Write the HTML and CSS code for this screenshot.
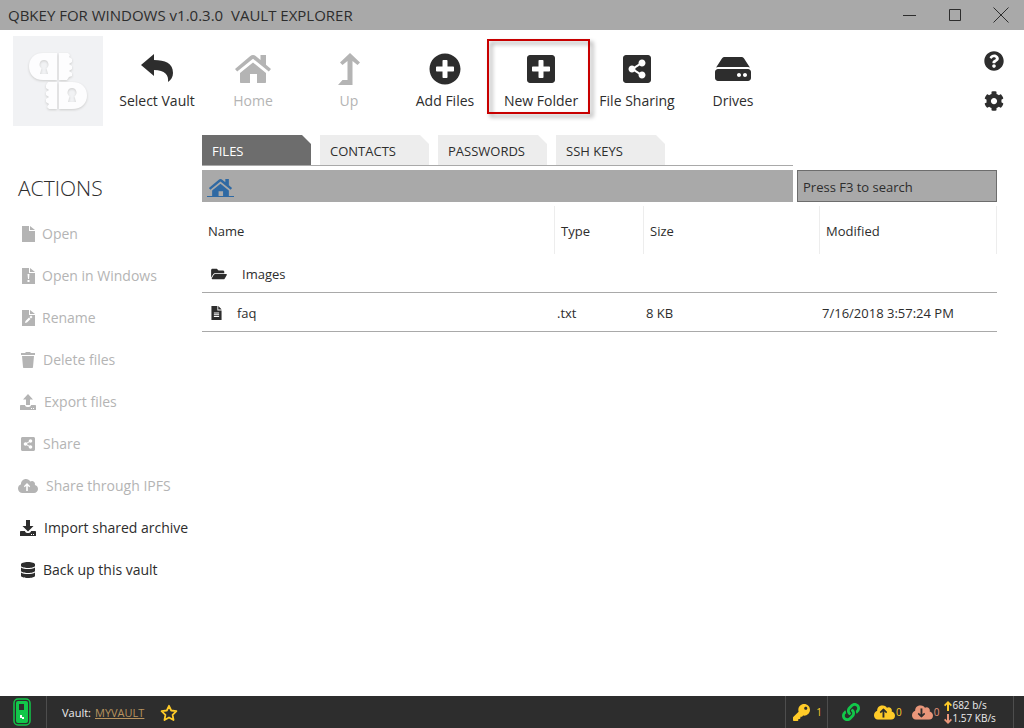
FILE: index.html
```html
<!DOCTYPE html>
<html lang="en">
<head>
    <meta charset="UTF-8">
    <meta name="viewport" content="width=device-width, initial-scale=1.0">
    <title>QBKEY for Windows - Vault Explorer</title>
    <link rel="stylesheet" href="styles.css">
</head>
<body>
    <!-- Shared icons -->
    <svg class="sprite" aria-hidden="true">
        <symbol id="home" viewBox="0 0 36 28">
            <path d="M18 0c1 0 2 .4 2.700 1L25.500 5V0H31v9.800L36 14l-2.200 2.600L18 3.700 2.200 16.600 0 14 15.300 1C16 .4 17 0 18 0z"/>
            <path d="M18 7.500L31 18v9c0 .6-.4 1-1 1h-8v-9h-7v9H6c-.6 0-1-.4-1-1v-9z"/>
        </symbol>
        <symbol id="share" viewBox="0 32 448 448">
            <path d="M448 80v352c0 26.510-21.490 48-48 48H48c-26.510 0-48-21.490-48-48V80c0-26.510 21.490-48 48-48h352c26.510 0 48 21.490 48 48zM304 296c-14.562 0-27.823 5.561-37.783 14.671l-67.958-40.775a56.339 56.339 0 0 0 0-27.793l67.958-40.775C276.177 210.439 289.438 216 304 216c30.928 0 56-25.072 56-56s-25.072-56-56-56-56 25.072-56 56c0 4.797.605 9.453 1.740 13.897l-67.958 40.775C171.823 205.561 158.562 200 144 200c-30.928 0-56 25.072-56 56s25.072 56 56 56c14.562 0 27.823-5.561 37.783-14.671l67.958 40.775a56.088 56.088 0 0 0-1.740 13.897c0 30.928 25.072 56 56 56s56-25.072 56-56C360 321.072 334.928 296 304 296z"/>
        </symbol>
        <symbol id="file" viewBox="0 0 12 16">
            <path d="M0 0h7v5h5v11H0z"/>
            <path d="M8 0l4 4H8z"/>
        </symbol>
        <symbol id="cloud" viewBox="0 32 640 448">
            <path d="M537.600 226.600c4.100-10.700 6.400-22.400 6.400-34.600 0-53-43-96-96-96-19.700 0-38.100 6-53.300 16.200C367 64.200 315.300 32 256 32c-88.400 0-160 71.600-160 160 0 2.700.1 5.400.2 8.100C40.200 219.800 0 273.200 0 336c0 79.500 64.500 144 144 144h368c70.700 0 128-57.300 128-128 0-61.900-44-113.600-102.400-125.400z"/>
        </symbol>
        <symbol id="arrow" viewBox="0 0 8 10">
            <path d="M4 0l4 4-1.200 1.200L5 3.500V10H3V3.500L1.200 5.200 0 4z"/>
        </symbol>
        <symbol id="tray" viewBox="0 0 16 5">
            <path d="M1 0h4c0 1.500 1.500 2 3 2s3-.5 3-2h4c.6 0 1 .4 1 1v4H0V1c0-.6.400-1 1-1zM11 3v1h1V3zM13 3v1h1V3z" fill-rule="evenodd"/>
        </symbol>
    </svg>

    <header class="titlebar">
        <h1>QBKEY FOR WINDOWS v1.0.3.0&nbsp; VAULT EXPLORER</h1>
        <div class="window-buttons">
            <button aria-label="Minimize"><svg width="16" height="16" viewBox="0 0 16 16"><path d="M2 8.500h13"/></svg></button>
            <button aria-label="Maximize"><svg width="16" height="16" viewBox="0 0 16 16"><path d="M2.500 2.500h11v11h-11z"/></svg></button>
            <button aria-label="Close"><svg width="16" height="16" viewBox="0 0 16 16"><path d="M.5.5l15 15M15.500.5l-15 15"/></svg></button>
        </div>
    </header>

    <div class="toolbar">
        <svg class="logo" viewBox="0 0 90 90" role="img" aria-label="QBKEY">
            <rect width="90" height="90" fill="#f1f2f4"/>
            <g class="logo-shape" fill="#fdfdfe" fill-rule="evenodd">
                <path d="M44 17v27H30C21 44 16 38 16 30.500S21 17 30 17zM31 24a4.500 4.500 0 0 0-2.500 8.200L27 38h8l-1.500-5.800A4.500 4.500 0 0 0 31 24z"/>
                <path d="M46 17h9l2 2-1 2 3 2v3l-3 2 3 2v3l-3 2 3 2v3l-3 1-2 3h-8z"/>
                <path d="M44 46v27h-8l-2-2 2-3-3-2v-3l3-2-3-2v-3l3-2-3-2v-3l2-3z"/>
                <path d="M46 46h13c10 0 15 6 15 13.500S69 73 59 73H46zM59 52a4.500 4.500 0 0 0-2.500 8.200L55 66h8l-1.500-5.800A4.500 4.500 0 0 0 59 52z"/>
            </g>
        </svg>
        <nav class="tools">
            <button class="tool">
                <svg width="34" height="32" viewBox="0 0 34 32"><path d="M1 12L14 1v6c11 0 19 3 19 13 0 4-2 7-5 9 1-7-3-12-14-12v6z"/></svg>
                <span>Select Vault</span>
            </button>
            <button class="tool" disabled>
                <svg width="36" height="28"><use href="#home"/></svg>
                <span>Home</span>
            </button>
            <button class="tool" disabled>
                <svg width="22" height="32" viewBox="0 0 22 32"><path d="M12 0l10 9.500-2.500 2.500-5-4v24H0l4.500-5H9.500V8l-5 4L2 9.500z"/></svg>
                <span>Up</span>
            </button>
            <button class="tool">
                <svg width="32" height="32" viewBox="0 0 512 512"><path d="M256 8C119 8 8 119 8 256s111 248 248 248 248-111 248-248S393 8 256 8zm144 276c0 6.600-5.400 12-12 12h-92v92c0 6.600-5.400 12-12 12h-56c-6.600 0-12-5.400-12-12v-92h-92c-6.600 0-12-5.400-12-12v-56c0-6.600 5.400-12 12-12h92v-92c0-6.600 5.400-12 12-12h56c6.600 0 12 5.400 12 12v92h92c6.600 0 12 5.400 12 12v56z"/></svg>
                <span>Add Files</span>
            </button>
            <button class="tool highlighted">
                <svg width="28" height="28" viewBox="0 32 448 448"><path d="M400 32H48C21.500 32 0 53.500 0 80v352c0 26.500 21.500 48 48 48h352c26.500 0 48-21.500 48-48V80c0-26.500-21.500-48-48-48zm-32 252c0 6.600-5.400 12-12 12h-92v92c0 6.600-5.400 12-12 12h-56c-6.600 0-12-5.400-12-12v-92H92c-6.600 0-12-5.400-12-12v-56c0-6.600 5.400-12 12-12h92v-92c0-6.600 5.400-12 12-12h56c6.600 0 12 5.400 12 12v92h92c6.600 0 12 5.400 12 12v56z"/></svg>
                <span>New Folder</span>
            </button>
            <button class="tool">
                <svg width="28" height="28"><use href="#share"/></svg>
                <span>File Sharing</span>
            </button>
            <button class="tool">
                <svg width="36" height="32" viewBox="0 0 576 512"><path d="M576 304v96c0 26.510-21.490 48-48 48H48c-26.510 0-48-21.490-48-48v-96c0-26.510 21.490-48 48-48h480c26.510 0 48 21.490 48 48zm-48-80a79.557 79.557 0 0 1 30.777 6.165L462.250 85.374A48.003 48.003 0 0 0 422.311 64H153.689a48 48 0 0 0-39.938 21.374L17.223 230.165A79.557 79.557 0 0 1 48 224h480zm-48 96c-17.673 0-32 14.327-32 32s14.327 32 32 32 32-14.327 32-32-14.327-32-32-32zm-96 0c-17.673 0-32 14.327-32 32s14.327 32 32 32 32-14.327 32-32-14.327-32-32-32z"/></svg>
                <span>Drives</span>
            </button>
        </nav>
        <div class="side-tools">
            <button aria-label="Help"><svg width="20" height="20" viewBox="0 0 512 512"><path d="M504 256c0 136.997-111.043 248-248 248S8 392.997 8 256C8 119.083 119.043 8 256 8s248 111.083 248 248zM262.655 90c-54.497 0-89.255 22.957-116.549 63.758-3.536 5.286-2.353 12.415 2.715 16.258l34.699 26.310c5.205 3.947 12.621 3.008 16.665-2.122 17.864-22.658 30.113-35.797 57.303-35.797 20.429 0 45.698 13.148 45.698 32.958 0 14.976-12.363 22.667-32.534 33.976C247.128 238.528 216 254.941 216 296v4c0 6.627 5.373 12 12 12h56c6.627 0 12-5.373 12-12v-1.333c0-28.462 83.186-29.647 83.186-106.667 0-58.002-60.165-102-116.531-102zM256 338c-25.365 0-46 20.635-46 46 0 25.364 20.635 46 46 46s46-20.636 46-46c0-25.365-20.635-46-46-46z"/></svg></button>
            <button aria-label="Settings"><svg width="20" height="20" viewBox="0 0 512 512"><path d="M487.400 315.700l-42.600-24.600c4.300-23.200 4.300-47 0-70.200l42.600-24.600c4.900-2.800 7.100-8.600 5.500-14-11.100-35.600-30-67.800-54.700-94.600-3.800-4.100-10-5.100-14.800-2.300L380.800 110c-17.900-15.400-38.500-27.300-60.800-35.100V25.800c0-5.600-3.900-10.500-9.400-11.700-36.700-8.200-74.300-7.800-109.200 0-5.500 1.200-9.400 6.100-9.400 11.700V75c-22.200 7.900-42.800 19.800-60.800 35.100L88.700 85.500c-4.900-2.800-11-1.900-14.800 2.300-24.700 26.700-43.600 58.900-54.700 94.600-1.700 5.400.6 11.200 5.500 14L67.300 221c-4.300 23.200-4.300 47 0 70.200l-42.600 24.600c-4.900 2.800-7.100 8.600-5.500 14 11.100 35.600 30 67.800 54.700 94.600 3.800 4.100 10 5.100 14.800 2.300l42.600-24.600c17.900 15.400 38.500 27.300 60.800 35.100v49.200c0 5.600 3.900 10.500 9.400 11.700 36.700 8.200 74.300 7.800 109.200 0 5.500-1.200 9.400-6.100 9.400-11.700v-49.200c22.200-7.900 42.800-19.800 60.800-35.100l42.600 24.600c4.900 2.800 11 1.900 14.800-2.300 24.700-26.700 43.600-58.900 54.700-94.600 1.500-5.500-.7-11.300-5.600-14.100zM256 336c-44.100 0-80-35.900-80-80s35.900-80 80-80 80 35.900 80 80-35.900 80-80 80z"/></svg></button>
        </div>
    </div>

    <div class="content">
        <aside class="actions">
            <h2>ACTIONS</h2>
            <button disabled>
                <svg width="18" height="16" viewBox="-4 0 18 16"><path d="M0 0h7v5h6v11H0zM8 0l5 4H8z"/></svg>
                Open
            </button>
            <button disabled>
                <svg width="18" height="16" viewBox="-4 0 18 16"><path d="M0 0h7v5h6v11H0zM8 0l5 4H8z"/><path class="cut" d="M5.500 6h2l-.5 5H6zM5.500 12h2v2h-2z"/></svg>
                Open in Windows
            </button>
            <button disabled>
                <svg width="18" height="16" viewBox="-4 0 18 16"><path d="M0 0h7v5h6v11H0zM8 0l5 4H8z"/><path class="cut" d="M3 13l.5-2 3.500-3.500 1.500 1.500L5 12.500zM7.500 7L9 5.500 10.500 7 9 8.500z"/></svg>
                Rename
            </button>
            <button disabled>
                <svg width="19" height="16" viewBox="-3 0 19 16"><path d="M0 1h4l1-1h4l1 1h4v2H0zM1 4h12l-1 11c0 .6-.4 1-1 1H3c-.6 0-1-.4-1-1z"/></svg>
                Delete files
            </button>
            <button disabled>
                <svg width="20" height="16" viewBox="-2 0 20 16"><path d="M8 0l5 5.500h-3V11H6V5.500H3z"/><use href="#tray" y="11" width="16" height="5"/></svg>
                Export files
            </button>
            <button disabled>
                <svg width="19" height="16" viewBox="0 0 19 16"><use href="#share" x="3" y="1" width="14" height="14"/></svg>
                Share
            </button>
            <button disabled>
                <svg width="22" height="16" viewBox="0 0 22 16"><use href="#cloud" y="1" width="20" height="14"/><use class="cut" href="#arrow" x="5" y="5" width="8" height="8"/></svg>
                Share through IPFS
            </button>
            <button>
                <svg width="20" height="16" viewBox="-2 0 20 16"><path d="M6 0h4v6h3.500L8 11.500 2.500 6H6z"/><use href="#tray" y="11" width="16" height="5"/></svg>
                Import shared archive
            </button>
            <button>
                <svg width="19" height="16" viewBox="-96 0 608 512"><path d="M448 73.143v45.714C448 159.143 347.667 192 224 192S0 159.143 0 118.857V73.143C0 32.857 100.333 0 224 0s224 32.857 224 73.143zM448 176v102.857C448 319.143 347.667 352 224 352S0 319.143 0 278.857V176c48.125 33.143 136.208 48.572 224 48.572S399.874 209.143 448 176zm0 160v102.857C448 479.143 347.667 512 224 512S0 479.143 0 438.857V336c48.125 33.143 136.208 48.572 224 48.572S399.874 369.143 448 336z"/></svg>
                Back up this vault
            </button>
        </aside>

        <main class="explorer">
            <div class="explorer-top">
                <div class="tabs" role="tablist">
                    <button class="tab active" role="tab" aria-selected="true">FILES</button>
                    <button class="tab" role="tab" aria-selected="false">CONTACTS</button>
                    <button class="tab" role="tab" aria-selected="false">PASSWORDS</button>
                    <button class="tab" role="tab" aria-selected="false">SSH KEYS</button>
                </div>
                <div class="path">
                    <a href="#" aria-label="Home"><svg width="27" height="20" viewBox="0 0 27 20"><use href="#home" y="1" width="27" height="18"/><path d="M0 18h27v1H0z"/></svg></a>
                </div>
                <input class="search" type="text" placeholder="Press F3 to search" aria-label="Search">
            </div>

            <table class="files">
                <colgroup>
                    <col class="col-name">
                    <col class="col-type">
                    <col class="col-size">
                    <col class="col-modified">
                </colgroup>
                <thead>
                    <tr><th>Name</th><th>Type</th><th>Size</th><th>Modified</th></tr>
                </thead>
                <tbody>
                    <tr>
                        <td>
                            <div class="entry">
                                <svg width="16" height="14" viewBox="0 0 576 512"><path d="M572.694 292.093L500.270 416.248A63.997 63.997 0 0 1 444.989 448H45.025c-18.523 0-30.064-20.093-20.731-36.093l72.424-124.155A64 64 0 0 1 152 256h399.964c18.523 0 30.064 20.093 20.730 36.093zM152 224h328v-48c0-26.510-21.490-48-48-48H272l-64-64H48C21.490 64 0 85.490 0 112v278.046l69.077-118.418C86.214 242.250 117.989 224 152 224z"/></svg>
                                Images
                            </div>
                        </td>
                        <td></td><td></td><td></td>
                    </tr>
                    <tr>
                        <td>
                            <div class="entry">
                                <svg width="11" height="14" viewBox="0 0 12 16"><use href="#file"/><path class="cut" d="M3 7.500h6v1H3zM3 9.500h6v1H3zM3 11.500h6v1H3z"/></svg>
                                faq
                            </div>
                        </td>
                        <td>.txt</td><td>8 KB</td><td>7/16/2018 3:57:24 PM</td>
                    </tr>
                </tbody>
            </table>
        </main>
    </div>

    <footer class="statusbar">
        <div class="device">
            <svg width="20" height="28" viewBox="0 0 20 28"><rect x="2" y="1" width="16" height="26" rx="4" fill="none" stroke="#12c74a" stroke-width="1.500"/><rect x="4" y="3" width="12" height="22" rx="2" fill="#12c74a"/><path d="M7 6h5v6H7z" fill="#2d2d2d"/><path d="M8 17h2v2h2v2h-2v-1H8z" fill="#fff"/></svg>
        </div>
        <div class="vault">
            Vault: <a href="#">MYVAULT</a>
            <button aria-label="Favorite"><svg width="18" height="18" viewBox="0 0 18 18"><path d="M9 1.800l2.200 4.700 5.200.7-3.800 3.600.9 5.200L9 13.500 4.500 16l.9-5.200-3.800-3.600 5.200-.7z" fill="none" stroke="#ffcb28" stroke-width="1.800" stroke-linejoin="round"/></svg></button>
        </div>
        <div class="keys">
            <svg width="17" height="17" viewBox="0 0 512 512"><path d="M512 176.001C512 273.203 433.202 352 336 352c-11.220 0-22.190-1.062-32.827-3.069l-24.012 27.014A23.999 23.999 0 0 1 261.223 384H224v40c0 13.255-10.745 24-24 24h-40v40c0 13.255-10.745 24-24 24H24c-13.255 0-24-10.745-24-24v-78.059c0-6.365 2.529-12.470 7.029-16.971l161.802-161.802C163.108 213.814 160 195.271 160 176 160 78.798 238.797.001 335.999 0 433.488-.001 512 78.511 512 176.001zM336 128c0 26.510 21.490 48 48 48s48-21.490 48-48-21.490-48-48-48-48 21.490-48 48z"/></svg>
            <span>1</span>
        </div>
        <div class="network">
            <svg class="link" width="18" height="18" viewBox="0 0 512 512">
                <path id="chain" d="M326.612 185.391c59.747 59.809 58.927 155.698.36 214.590-.11.12-.24.25-.36.37l-67.200 67.200c-59.270 59.270-155.699 59.262-214.960 0-59.270-59.260-59.270-155.700 0-214.960l37.106-37.106c9.840-9.840 26.786-3.300 27.294 10.606.648 17.722 3.826 35.527 9.690 52.721 1.986 5.822.567 12.262-3.783 16.612l-13.087 13.087c-28.026 28.026-28.905 73.660-1.155 101.960 28.024 28.579 74.086 28.749 102.325.51l67.200-67.190c28.191-28.191 28.073-73.757 0-101.830-3.701-3.694-7.429-6.564-10.341-8.569a16.037 16.037 0 0 1-6.947-12.606c-.396-10.567 3.348-21.456 11.698-29.806l21.054-21.055c5.521-5.521 14.182-6.199 20.584-1.731a152.482 152.482 0 0 1 20.522 17.197z"/>
                <use href="#chain" transform="rotate(180 256 256)"/>
            </svg>
            <div class="count up">
                <svg width="21" height="15" viewBox="0 0 20 14"><use href="#cloud" width="20" height="14"/><use class="dark" href="#arrow" x="5" y="3" width="8" height="9"/></svg>
                <span>0</span>
            </div>
            <div class="count down">
                <svg width="21" height="15" viewBox="0 0 20 14"><use href="#cloud" width="20" height="14"/><g transform="rotate(180 9 7.500)"><use class="dark" href="#arrow" x="5" y="3" width="8" height="9"/></g></svg>
                <span>0</span>
            </div>
            <div class="speed">
                <div><svg class="up" width="8" height="10"><use href="#arrow"/></svg>682 b/s</div>
                <div><svg class="down" width="8" height="10" viewBox="0 0 8 10"><g transform="rotate(180 4 5)"><use href="#arrow" width="8" height="10"/></g></svg>1.57 KB/s</div>
            </div>
        </div>
    </footer>
</body>
</html>
```

FILE: styles.css
```css
* {
    box-sizing: border-box;
}
body {
    margin: 0;
    min-height: 100vh;
    display: flex;
    flex-direction: column;
    background: #fff;
    color: #2d2d2d;
    font-family: "Segoe UI", "Open Sans", "Noto Sans", sans-serif;
    font-size: 14px;
    line-height: 20px;
}
button {
    margin: 0;
    padding: 0;
    border: none;
    background: none;
    color: inherit;
    font: inherit;
    cursor: pointer;
}
button:disabled {
    color: #b4b4b4;
    cursor: default;
}
svg {
    display: block;
    flex: none;
    fill: currentColor;
}
.sprite {
    position: absolute;
    width: 0;
    height: 0;
}
.cut {
    fill: #fff;
}

/* Title bar */
.titlebar {
    display: flex;
    justify-content: space-between;
    align-items: center;
    height: 30px;
    padding: 0 15px 0 8px;
    background: #a9a9a9;
}
.titlebar h1 {
    margin: 0;
    font-size: 15px;
    font-weight: 400;
}
.window-buttons {
    display: flex;
    gap: 30px;
}
.window-buttons svg {
    fill: none;
    stroke: #2d2d2d;
}

/* Toolbar */
.toolbar {
    display: flex;
    padding: 6px 20px 9px 13px;
}
.logo {
    width: 90px;
    height: 90px;
}
.logo-shape {
    filter: drop-shadow(0 1px 1px #ccc);
}
.tools {
    display: flex;
    flex: 1;
    margin-left: 6px;
}
.tool {
    position: relative;
    display: flex;
    flex-direction: column;
    align-items: center;
    width: 96px;
    height: 80px;
    padding-top: 13px;
    white-space: nowrap;
}
.tool svg {
    margin: auto 0;
}
.tool span {
    margin: 2px 0 5px;
}
.highlighted::after {
    content: "";
    position: absolute;
    top: 3px;
    right: -1px;
    bottom: 2px;
    left: -6px;
    border: 2px solid #c80000;
    filter: drop-shadow(3px 3px 2px rgba(0, 0, 0, 0.4));
}
.side-tools {
    display: flex;
    flex-direction: column;
    gap: 20px;
    padding-top: 15px;
}

/* Content */
.content {
    display: flex;
    flex: 1;
}
.actions {
    display: flex;
    flex-direction: column;
    align-items: flex-start;
    width: 202px;
    padding: 38px 0 0 18px;
}
.actions h2 {
    margin: 0 0 10px;
    font-size: 21px;
    line-height: 30px;
    font-weight: 300;
}
.actions button {
    display: flex;
    align-items: center;
    gap: 6px;
    height: 42px;
    white-space: nowrap;
}
.explorer {
    flex: 1;
    margin-right: 27px;
    font-size: 13px;
}
.explorer-top {
    display: grid;
    grid-template-columns: 1fr 200px;
    gap: 4px;
}
.tabs {
    display: flex;
    gap: 9px;
    grid-column: 1;
    border-bottom: 1px solid #a9a9a9;
}
.tab {
    width: 109px;
    height: 30px;
    padding: 2px 10px 0;
    background: #ededed;
    text-align: left;
    clip-path: polygon(0 0, 100px 0, 100% 9px, 100% 100%, 0 100%);
}
.tab.active {
    background: #6d6d6d;
    color: #fff;
}
.path {
    grid-column: 1;
    display: flex;
    align-items: center;
    height: 32px;
    padding: 3px 5px 0;
    background: #a9a9a9;
}
.path a {
    color: #2f69a3;
}
.search {
    width: 100%;
    height: 32px;
    padding: 2px 5px 0;
    border: 1px solid #6d6d6d;
    border-radius: 0;
    background: #a9a9a9;
    font: inherit;
    color: #2d2d2d;
}
.search::placeholder {
    color: #2d2d2d;
    opacity: 1;
}

/* File list */
.files {
    width: 100%;
    margin-top: 4px;
    border-collapse: separate;
    border-spacing: 0;
    table-layout: fixed;
}
.col-type {
    width: 89px;
}
.col-size {
    width: 176px;
}
.col-modified {
    width: 177px;
}
.files th {
    height: 48px;
    padding: 2px 6px 0;
    border-right: 1px solid #ededed;
    font-weight: 400;
    text-align: left;
}
.files td {
    height: 39px;
    padding: 2px 2px 0;
    border-bottom: 1px solid #a9a9a9;
    white-space: nowrap;
}
.entry {
    display: flex;
    align-items: center;
    gap: 15px;
    padding-left: 7px;
}

/* Status bar */
.statusbar {
    display: flex;
    height: 32px;
    padding-right: 10px;
    background: #2d2d2d;
    color: #ededed;
    font-size: 11px;
}
.statusbar > div {
    display: flex;
    align-items: center;
    border-right: 1px solid #4d4d4d;
}
.device {
    width: 47px;
    padding-left: 12px;
}
.statusbar .vault {
    flex: 1;
    gap: 4px;
    padding: 2px 0 0 15px;
}
.vault a {
    color: #b8935e;
}
.vault button {
    margin-left: 12px;
}
.keys {
    width: 42px;
    padding: 0 5px 0 7px;
    justify-content: space-between;
    color: #ffcb28;
    font-size: 10px;
}
.network {
    width: 186px;
    padding-left: 14px;
}
.link {
    margin-right: 14px;
    color: #12c74a;
}
.up {
    color: #ffcb28;
}
.down {
    color: #e9967a;
}
.count {
    display: flex;
    align-items: center;
    gap: 1px;
    margin-right: 10px;
    font-size: 10px;
}
.count.down {
    margin-right: 5px;
}
.dark {
    fill: #2d2d2d;
}
.speed {
    font-size: 10px;
    line-height: 13px;
    white-space: nowrap;
}
.speed div {
    display: flex;
    align-items: center;
}
```
